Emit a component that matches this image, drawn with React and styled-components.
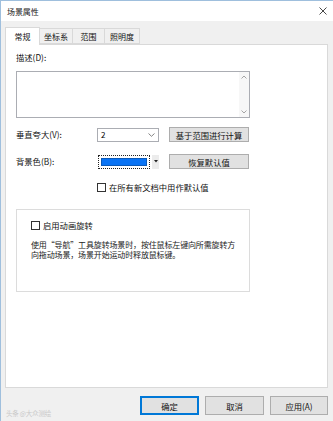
import React from 'react';
import styled, { createGlobalStyle } from 'styled-components';

const GlobalStyle = createGlobalStyle`
  html, body {
    margin: 0;
    padding: 0;
    background: #ffffff;
  }
  body {
    font-family: "Noto Sans CJK SC", "Liberation Sans", sans-serif;
    font-size: 8.3px;
    color: #000;
  }
`;

const Window = styled.div`
  position: relative;
  width: 333px;
  height: 421px;
  box-sizing: border-box;
  border-left: 1px solid #9fbfdd;
  border-top: 1px solid #9fbfdd;
  background: #f0f0f0;
  display: flex;
  flex-direction: column;
  overflow: hidden;
`;

const TitleBar = styled.div`
  height: 20px;
  background: #ffffff;
  display: flex;
  align-items: center;
  justify-content: space-between;
  padding: 0 6px 0 6px;
`;

const Title = styled.span`
  font-size: 8px;
  color: #1a1a1a;
  letter-spacing: -0.1px;
`;

const Body = styled.div`
  flex: 1;
  display: flex;
  flex-direction: column;
  padding: 7px 5px 6px 4px;
  min-height: 0;
`;

const TabRow = styled.div`
  height: 16px;
  display: flex;
  align-items: flex-end;
  position: relative;
  z-index: 1;
`;

const Tab = styled.div`
  box-sizing: border-box;
  height: ${({ $active }) => ($active ? '18px' : '16px')};
  width: ${({ $w }) => $w}px;
  margin-bottom: ${({ $active }) => ($active ? '-1px' : '0')};
  background: ${({ $active }) => ($active ? '#ffffff' : '#f0f0f0')};
  border: 1px solid #d9d9d9;
  border-bottom: ${({ $active }) => ($active ? 'none' : '1px solid #d9d9d9')};
  margin-left: ${({ $first }) => ($first ? '0' : '-1px')};
  display: flex;
  align-items: center;
  justify-content: center;
  font-size: 8px;
  color: #111;
  padding-top: ${({ $active }) => ($active ? '0' : '1px')};
`;

const Panel = styled.div`
  flex: 1;
  box-sizing: border-box;
  background: #ffffff;
  border: 1px solid #d9d9d9;
  padding: 7px 9px 0 10px;
  display: flex;
  flex-direction: column;
`;

const Label = styled.div`
  font-size: 8.3px;
  color: #111;
  line-height: 11px;
`;

const TextArea = styled.div`
  margin-top: 8px;
  width: 234px;
  height: 47px;
  box-sizing: border-box;
  border: 1px solid #abadb3;
  display: flex;
  justify-content: flex-end;
`;

const ScrollBar = styled.div`
  width: 10px;
  background: #f7f7f7;
  display: flex;
  flex-direction: column;
  justify-content: space-between;
  align-items: center;
  padding: 3px 0;
`;

const FormGrid = styled.div`
  margin-top: 9px;
  display: grid;
  grid-template-columns: 81px 72px 80px;
  align-items: center;
`;

const FormRow = styled.div`
  display: contents;
`;

const RowLabel = styled(Label)`
  height: ${({ $h }) => $h}px;
  display: flex;
  align-items: center;
  margin-top: ${({ $mt }) => $mt || 0}px;
`;

const Combo = styled.div`
  box-sizing: border-box;
  width: 62px;
  height: 14px;
  border: 1px solid #abadb3;
  display: flex;
  align-items: center;
  justify-content: space-between;
  padding: 0 3px 0 3px;
  font-size: 8px;
`;

const ColorPick = styled.div`
  display: flex;
  align-items: center;
  height: 14px;
  margin-top: ${({ $mt }) => $mt || 0}px;
`;

const Swatch = styled.div`
  box-sizing: border-box;
  width: 52px;
  height: 14px;
  margin-left: 1px;
  border: 1px dotted #222;
  padding: 2px;
  background: #ffffff;
`;

const SwatchFill = styled.div`
  width: 100%;
  height: 100%;
  background: #0a74f5;
  box-shadow: inset 0 0 0 1px #0b5ab8;
`;

const ArrowBtn = styled.div`
  box-sizing: border-box;
  width: 7px;
  height: 14px;
  margin-left: 2px;
  background: #ececec;
  display: flex;
  align-items: center;
  justify-content: center;
`;

const Button = styled.div`
  box-sizing: border-box;
  height: ${({ $h }) => $h || 15}px;
  width: ${({ $w }) => $w || 80}px;
  background: #e1e1e1;
  border: ${({ $default }) => ($default ? '2px solid #0078d7' : '1px solid #adadad')};
  display: flex;
  align-items: center;
  justify-content: center;
  font-size: 8.3px;
  color: #111;
  margin-top: ${({ $mt }) => $mt || 0}px;
`;

const CheckLine = styled.label`
  display: flex;
  align-items: center;
  gap: 3px;
  font-size: 8.3px;
  color: #111;
  white-space: nowrap;
  margin-left: ${({ $ml }) => $ml || 0}px;
  margin-top: ${({ $mt }) => $mt || 0}px;
`;

const Box = styled.span`
  box-sizing: border-box;
  width: 9px;
  height: 9px;
  border: 1px solid #333;
  background: #fff;
  display: inline-block;
`;

const Group = styled.div`
  margin-top: 16px;
  width: 234px;
  height: 83px;
  box-sizing: border-box;
  border: 1px solid #dcdcdc;
  padding: 9px 0 0 14px;
`;

const Note = styled.p`
  margin: 9px 0 0 0;
  font-size: 8px;
  line-height: 10px;
  color: #222;
  white-space: nowrap;
  letter-spacing: -0.15px;
`;

const Footer = styled.div`
  margin-top: 8px;
  height: 19px;
  display: flex;
  justify-content: flex-end;
  gap: 6px;
`;

const Watermark = styled.div`
  position: absolute;
  left: 5px;
  bottom: 3px;
  font-size: 6.5px;
  color: #c9c9c9;
  letter-spacing: -0.2px;
`;

const Chevron = ({ up }) => (
  <svg width="6" height="4" viewBox="0 0 6 4">
    <path d={up ? 'M0.5 3.5 L3 1 L5.5 3.5' : 'M0.5 0.5 L3 3 L5.5 0.5'} fill="none" stroke="#9a9a9a" strokeWidth="0.9" />
  </svg>
);

export default function App() {
  return (
    <>
      <GlobalStyle />
      <Window>
        <TitleBar>
          <Title>场景属性</Title>
          <svg width="8" height="8" viewBox="0 0 8 8">
            <path d="M0.5 0.5 L7.5 7.5 M7.5 0.5 L0.5 7.5" stroke="#333" strokeWidth="0.9" />
          </svg>
        </TitleBar>
        <Body>
          <TabRow>
            <Tab $active $first $w={35}>常规</Tab>
            <Tab $w={34}>坐标系</Tab>
            <Tab $w={33}>范围</Tab>
            <Tab $w={36}>照明度</Tab>
          </TabRow>
          <Panel>
            <Label>描述(D):</Label>
            <TextArea>
              <ScrollBar>
                <Chevron up />
                <Chevron />
              </ScrollBar>
            </TextArea>
            <FormGrid>
              <FormRow>
                <RowLabel $h={15}>垂直夸大(V):</RowLabel>
                <Combo>
                  <span>2</span>
                  <svg width="7" height="4" viewBox="0 0 7 4">
                    <path d="M0.5 0.5 L3.5 3.3 L6.5 0.5" fill="none" stroke="#777" strokeWidth="0.9" />
                  </svg>
                </Combo>
                <Button>基于范围进行计算</Button>
              </FormRow>
              <FormRow>
                <RowLabel $h={15} $mt={12}>背景色(B):</RowLabel>
                <ColorPick $mt={12}>
                  <Swatch><SwatchFill /></Swatch>
                  <ArrowBtn>
                    <svg width="4" height="3" viewBox="0 0 4 3">
                      <path d="M0 0 L4 0 L2 2.5 Z" fill="#222" />
                    </svg>
                  </ArrowBtn>
                </ColorPick>
                <Button $mt={12}>恢复默认值</Button>
              </FormRow>
            </FormGrid>
            <CheckLine $ml={81} $mt={12}>
              <Box />
              在所有新文档中用作默认值
            </CheckLine>
            <Group>
              <CheckLine>
                <Box />
                启用动画旋转
              </CheckLine>
              <Note>
                使用“导航”工具旋转场景时，按住鼠标左键向所需旋转方
                <br />
                向拖动场景，场景开始运动时释放鼠标键。
              </Note>
            </Group>
          </Panel>
          <Footer>
            <Button $default $w={59} $h={19}>确定</Button>
            <Button $w={59} $h={19}>取消</Button>
            <Button $w={58} $h={19}>应用(A)</Button>
          </Footer>
        </Body>
        <Watermark>头条 @大众测绘</Watermark>
      </Window>
    </>
  );
}
